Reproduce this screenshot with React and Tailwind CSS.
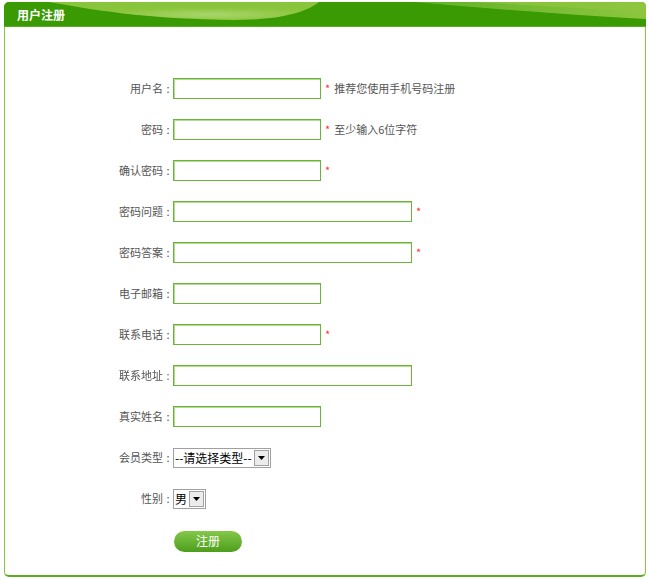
import React from "react";

const font = { fontFamily: '"Noto Sans CJK SC", "Noto Sans", sans-serif' };

function Row({ label, children }) {
  return (
    <div className="flex h-[41px] items-center">
      <div className="flex w-[168px] shrink-0 justify-end text-[11px] text-[#555]">
        <span>{label}</span>
        <span className="w-[10px] text-center">:</span>
      </div>
      <div className="flex items-center">{children}</div>
    </div>
  );
}

function Input({ wide, autoFocus }) {
  return (
    <input
      autoFocus={autoFocus}
      className={`${wide ? "w-[239px]" : "w-[148px]"} h-[21px] border border-[#6cb33c] bg-white px-[2px] text-[12px] shadow-[inset_1px_1px_0_#b4dc8e] outline-none`}
    />
  );
}

function Star({ hint }) {
  return (
    <span className="ml-[4px] flex items-center text-[11px] text-[#555]">
      <span className="text-[#ff3030]">*</span>
      {hint && <span className="ml-[4px]">{hint}</span>}
    </span>
  );
}

function FakeSelect({ text }) {
  return (
    <div className="flex h-[20px] items-center border border-[#a0a0a0] bg-white">
      <span className="whitespace-nowrap pl-[1px] pr-[2px] text-[12px] leading-[18px] text-black">{text}</span>
      <span className="mr-[1px] flex h-[16px] w-[15px] shrink-0 items-center justify-center border border-[#a0a0a0] bg-[#ececec]">
        <svg width="7" height="4" viewBox="0 0 7 4">
          <path d="M0 0H7L3.5 4Z" fill="#000" />
        </svg>
      </span>
    </div>
  );
}

export default function App() {
  return (
    <div className="h-[579px] w-[650px] bg-white px-[4px] pt-[2px]" style={font}>
      <div className="flex h-[575px] flex-col rounded-[5px] border border-[#8cc63f] border-b-[#5aad1e] border-b-2">
        <div className="relative -mx-px -mt-px h-[25px] overflow-hidden rounded-t-[5px] bg-[#3a9a04]">
          <svg className="absolute inset-0" width="644" height="25" viewBox="0 0 644 25" preserveAspectRatio="none">
            <defs>
              <radialGradient id="g1" cx="0.6" cy="0.7" r="0.5">
                <stop offset="0" stopColor="#a8d66c" />
                <stop offset="0.7" stopColor="#8dc63f" />
                <stop offset="1" stopColor="#88c43c" />
              </radialGradient>
              <linearGradient id="g2" x1="0" y1="0" x2="1" y2="0">
                <stop offset="0" stopColor="#5fb127" />
                <stop offset="1" stopColor="#8dc63f" />
              </linearGradient>
            </defs>
            <path d="M45 0 C100 10 150 17 230 18 C270 18 300 12 315 0 Z" fill="url(#g1)" />
            <path d="M410 0 C480 6 560 13 644 17 L644 0 Z" fill="url(#g2)" />
            <path d="M470 0 C540 4 600 8 644 10 L644 0 Z" fill="#8dc63f" opacity="0.8" />
            <rect x="0" y="24" width="644" height="1" fill="#5aad1e" />
          </svg>
          <div className="relative pl-[13px] text-[12px] font-bold leading-[25px] text-white">用户注册</div>
        </div>
        <div className="pt-[41px]">
          <Row label="用户名">
            <Input />
            <Star hint="推荐您使用手机号码注册" />
          </Row>
          <Row label="密码">
            <Input />
            <Star hint="至少输入6位字符" />
          </Row>
          <Row label="确认密码">
            <Input />
            <Star />
          </Row>
          <Row label="密码问题">
            <Input wide />
            <Star />
          </Row>
          <Row label="密码答案">
            <Input wide />
            <Star />
          </Row>
          <Row label="电子邮箱">
            <Input />
          </Row>
          <Row label="联系电话">
            <Input autoFocus />
            <Star />
          </Row>
          <Row label="联系地址">
            <Input wide />
          </Row>
          <Row label="真实姓名">
            <Input />
          </Row>
          <Row label="会员类型">
            <FakeSelect text="--请选择类型--" />
          </Row>
          <Row label="性别">
            <FakeSelect text="男" />
          </Row>
          <div className="mt-[8px] pl-[169px]">
            <button className="h-[21px] w-[68px] rounded-full bg-gradient-to-b from-[#84c84a] to-[#4c9e19] text-[12px] text-white">
              注册
            </button>
          </div>
        </div>
      </div>
    </div>
  );
}
